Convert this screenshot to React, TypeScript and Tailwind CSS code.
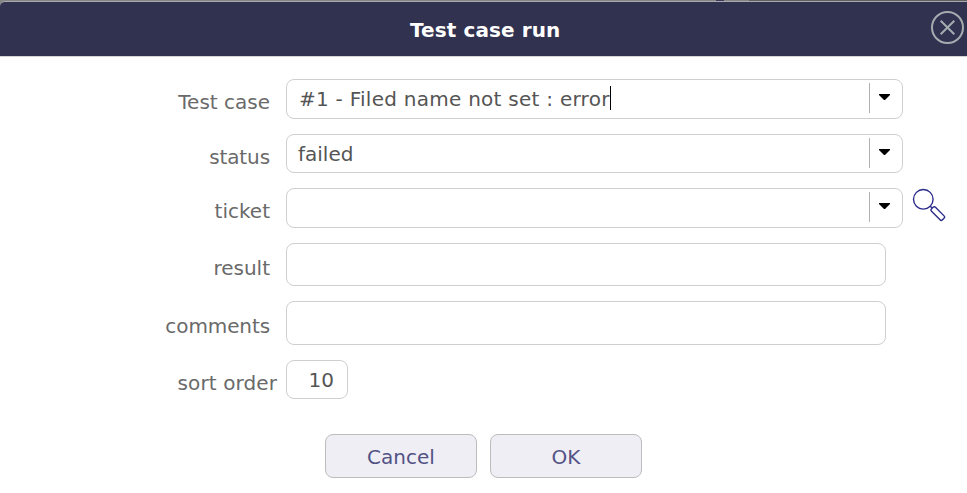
import type { ReactNode } from 'react';

type FieldRowProps = {
  label: string;
  rowClass: string;
  labelClass: string;
  children: ReactNode;
};

function FieldRow({ label, rowClass, labelClass, children }: FieldRowProps) {
  return (
    <div className={`flex items-start ${rowClass}`}>
      <label className={`shrink-0 whitespace-nowrap text-right leading-6 text-[#6a6a6a] ${labelClass}`}>{label}</label>
      {children}
    </div>
  );
}

function Select({ className, children }: { className: string; children?: ReactNode }) {
  return (
    <div className={`flex w-[617px] shrink-0 items-start rounded-lg border border-[#cfcfcf] bg-white ${className}`}>
      <div className="flex min-w-0 flex-1 whitespace-nowrap leading-6 text-[#555555]">{children}</div>
      <div className="mt-[3px] flex h-[30px] w-[33px] border-l border-[#b0b0b0] pl-[9px] pt-[11px]">
        <svg width="11" height="6" viewBox="0 0 11 6" className="shrink-0">
          <path d="M0 0H11V1L6 6H5L0 1Z" fill="#000" />
        </svg>
      </div>
    </div>
  );
}

export default function App() {
  return (
    <div className="h-[493px] w-[967px] overflow-hidden bg-white text-[20px] [font-family:Verdana,'DejaVu_Sans',sans-serif]">
      <div className="flex h-px bg-[#858585]">
        <div className="ml-[716px] w-2 bg-[#3c3a5c]" />
        <div className="ml-[25px] flex-1 bg-[#606060]" />
      </div>
      <div className="bg-[#858585]">
        <header className="flex h-14 items-center rounded-tl-[5px] border-b border-t border-b-[#d3d3d3] border-t-[#a9a9ae] bg-[#313150] pr-[3px]">
          <h1 className="ml-[410px] flex-1 whitespace-nowrap pt-[2px] font-bold leading-6 tracking-[0.1px] text-white">Test case run</h1>
          <button type="button" aria-label="Close" className="mt-[-3px]">
            <svg width="33" height="33" viewBox="0 0 33 33" fill="none" stroke="#a5acb0">
              <circle cx="16.5" cy="16.5" r="15.5" strokeWidth="2" />
              <path d="M9.7 9.7L23.3 23.3M23.3 9.7L9.7 23.3" strokeWidth="2" />
            </svg>
          </button>
        </header>
      </div>

      <form className="pt-[22px]">
        <FieldRow label="Test case" rowClass="h-[55px]" labelClass="w-[286px] pr-4 pt-[11px]">
          <Select className="h-10">
            <span className="pl-[12px] pt-[7px] tracking-[0.26px]">#1 - Filed name not set : error</span>
            <span className="mt-[6px] h-6 w-px bg-black" />
          </Select>
        </FieldRow>
        <FieldRow label="status" rowClass="h-[54px]" labelClass="w-[286px] pr-4 pt-[11px] tracking-[-0.1px]">
          <Select className="h-[39px]">
            <span className="pl-[11px] pt-[7px]">failed</span>
          </Select>
        </FieldRow>
        <FieldRow label="ticket" rowClass="h-[55px]" labelClass="w-[286px] pr-4 pt-[11px]">
          <Select className="h-10" />
          <svg width="34" height="34" viewBox="0 0 34 34" fill="none" stroke="#2b2b8c" className="ml-[9px] shrink-0">
            <circle cx="11.3" cy="11.3" r="9.8" strokeWidth="1.4" />
            <path d="M18.3 18.3L20.3 20.3" strokeWidth="1.4" />
            <rect x="-2.8" y="-1" width="5.6" height="15.5" rx="1.7" strokeWidth="1.4" transform="translate(21 20.8) rotate(-45)" />
          </svg>
        </FieldRow>
        <FieldRow label="result" rowClass="h-[58px]" labelClass="w-[286px] pr-4 pt-[13px]">
          <div className="h-[43px] w-[600px] rounded-lg border border-[#cfcfcf]" />
        </FieldRow>
        <FieldRow label="comments" rowClass="h-[59px]" labelClass="w-[286px] pr-4 pt-[13px] tracking-[-0.1px]">
          <div className="h-11 w-[600px] rounded-lg border border-[#cfcfcf]" />
        </FieldRow>
        <FieldRow label="sort order" rowClass="h-[74px]" labelClass="w-[286px] pr-[9px] pt-[11px] tracking-[0.1px]">
          <div className="h-[39px] w-[62px] rounded-lg border border-[#cfcfcf] pr-[13px] pt-[7px] text-right leading-6 text-[#555555]">10</div>
        </FieldRow>
        <div className="flex gap-[13px] pl-[325px]">
          <button type="button" className="h-11 w-[152px] rounded-lg border border-[#bcbcbc] bg-[#efeef5] pt-[2px] leading-6 text-[#535285]">Cancel</button>
          <button type="button" className="h-11 w-[152px] rounded-lg border border-[#bcbcbc] bg-[#efeef5] pt-[2px] leading-6 text-[#535285]">OK</button>
        </div>
      </form>
    </div>
  );
}
